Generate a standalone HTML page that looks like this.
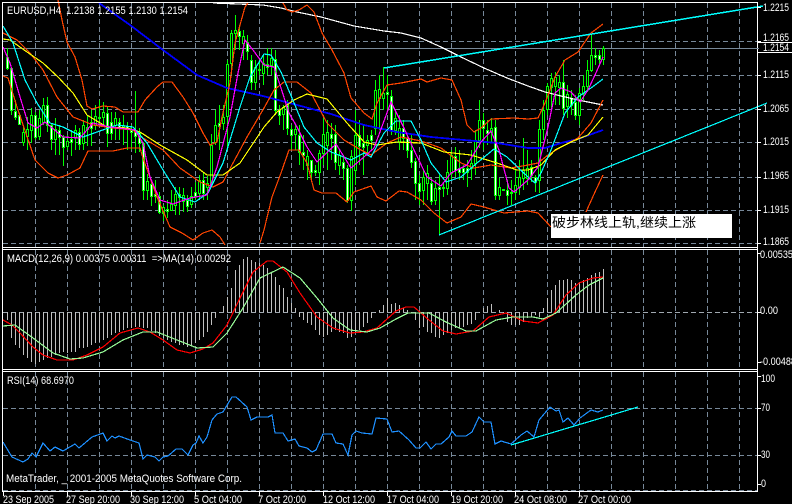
<!DOCTYPE html>
<html><head><meta charset="utf-8"><style>
html,body{margin:0;padding:0;background:#000;width:792px;height:504px;overflow:hidden}
svg{display:block}
text{font-family:"Liberation Sans","Noto Sans CJK SC",sans-serif;font-size:11px;fill:#fff}
polyline{fill:none;stroke-width:1.2}
</style></head><body>
<svg width="792" height="504" viewBox="0 0 792 504" xmlns="http://www.w3.org/2000/svg" shape-rendering="crispEdges">
<rect width="792" height="504" fill="#000"/>
<!-- grid -->
<path fill="none" stroke="#778899" stroke-dasharray="5 3" d="M3 41.5H757M3 75.5H757M3 109.5H757M3 142.5H757M3 177.5H757M3 210.5H757M3 243.5H757M3 408.5H757M3 455.5H757
M35.5 3V247M67.5 3V247M99.5 3V247M131.5 3V247M163.5 3V247M195.5 3V247M227.5 3V247M259.5 3V247M291.5 3V247M323.5 3V247M355.5 3V247M387.5 3V247M419.5 3V247M451.5 3V247M483.5 3V247M515.5 3V247M547.5 3V247M579.5 3V247M611.5 3V247M643.5 3V247M675.5 3V247M707.5 3V247M739.5 3V247
M35.5 250V369M67.5 250V369M99.5 250V369M131.5 250V369M163.5 250V369M195.5 250V369M227.5 250V369M259.5 250V369M291.5 250V369M323.5 250V369M355.5 250V369M387.5 250V369M419.5 250V369M451.5 250V369M483.5 250V369M515.5 250V369M547.5 250V369M579.5 250V369M611.5 250V369M643.5 250V369M675.5 250V369M707.5 250V369M739.5 250V369
M35.5 372V491M67.5 372V491M99.5 372V491M131.5 372V491M163.5 372V491M195.5 372V491M227.5 372V491M259.5 372V491M291.5 372V491M323.5 372V491M355.5 372V491M387.5 372V491M419.5 372V491M451.5 372V491M483.5 372V491M515.5 372V491M547.5 372V491M579.5 372V491M611.5 372V491M643.5 372V491M675.5 372V491M707.5 372V491M739.5 372V491"/>
<path stroke="#778899" d="M3 48.5H757"/>
<path fill="none" stroke="#a0a8b0" stroke-dasharray="5 3" d="M3 312.5H757"/>
<!-- wicks -->
<path fill="none" stroke="#00ff00" d="M7.5 48V70M11.5 68V115M15.5 100V120M19.5 113V124M23.5 125V146M27.5 117V150M31.5 108V143M35.5 112V140M39.5 110V140M43.5 98V125M47.5 97V132M51.5 123V150M55.5 118V155M59.5 125V155M63.5 135V166M67.5 135V150M71.5 130V156M75.5 125V150M79.5 128V150M83.5 120V150M87.5 115V146M91.5 110V146M95.5 105V130M99.5 100V125M103.5 102V125M107.5 106V147M111.5 112V140M115.5 112V140M119.5 118V140M123.5 115V145M127.5 122V150M131.5 125V150M135.5 91V153M139.5 128V152M143.5 142V200M147.5 174V200M151.5 180V206M155.5 180V203M159.5 192V214M163.5 205V221M167.5 200V218M171.5 190V211M175.5 187V215M179.5 187V215M183.5 188V212M187.5 195V212M191.5 187V208M195.5 182V200M199.5 175V200M203.5 172V200M207.5 176V200M211.5 134V187M215.5 110V145M219.5 105V150M223.5 105V130M227.5 60V150M231.5 30V75M235.5 15V50M239.5 25V50M243.5 30V60M247.5 35V60M251.5 55V90M255.5 60V90M259.5 58V75M263.5 55V85M267.5 48V75M271.5 48V75M275.5 50V115M279.5 105V125M283.5 105V130M287.5 100V135M291.5 125V150M295.5 125V150M299.5 125V165M303.5 135V170M307.5 150V180M311.5 160V182M315.5 165V176M319.5 150V185M323.5 118V165M327.5 120V170M331.5 123V160M335.5 125V170M339.5 150V175M343.5 155V180M347.5 165V203M351.5 150V211M355.5 110V185M359.5 120V165M363.5 125V175M367.5 135V155M371.5 130V150M375.5 80V135M379.5 75V130M383.5 67V110M387.5 75V110M391.5 90V135M395.5 112V135M399.5 115V150M403.5 120V150M407.5 135V158M411.5 135V168M415.5 158V200M419.5 175V205M423.5 170V205M427.5 165V200M431.5 178V205M435.5 180V205M439.5 173V235M443.5 183V197M447.5 160V195M451.5 150V180M455.5 147V177M459.5 150V180M463.5 165V180M467.5 160V187M471.5 150V180M475.5 130V175M479.5 100V148M483.5 113V150M487.5 120V145M491.5 118V143M495.5 120V200M499.5 178V200M503.5 189V191M507.5 180V205M511.5 180V205M515.5 170V200M519.5 160V195M523.5 138V190M527.5 150V185M531.5 160V182M535.5 175V192M539.5 120V193M543.5 100V140M547.5 83V115M551.5 73V110M555.5 72V105M559.5 75V105M563.5 60V115M567.5 85V118M571.5 90V115M575.5 95V120M579.5 88V125M583.5 75V100M587.5 60V92M591.5 35V72M595.5 48V65M599.5 50V65M603.5 46V65"/>
<!-- bear bodies -->
<path fill="#fff" stroke="#00ff00" d="M6.5 57.5h2v11h-2zM10.5 68.5h2v42h-2zM14.5 111.5h2v6h-2zM18.5 115.5h2v9h-2zM34.5 115.5h2v22h-2zM46.5 105.5h2v20h-2zM50.5 125.5h2v14h-2zM58.5 130.5h2v7h-2zM62.5 137.5h2v10h-2zM70.5 139.5h2v3h-2zM78.5 132.5h2v12h-2zM90.5 122.5h2v6h-2zM98.5 117.5h2v1h-2zM106.5 113.5h2v20h-2zM110.5 122.5h2v11h-2zM118.5 122.5h2v6h-2zM126.5 126.5h2v3h-2zM130.5 130.5h2v2h-2zM134.5 130.5h2v6h-2zM138.5 132.5h2v11h-2zM142.5 143.5h2v47h-2zM150.5 184.5h2v12h-2zM154.5 194.5h2v2h-2zM158.5 196.5h2v16h-2zM166.5 209.5h2v2h-2zM178.5 194.5h2v3h-2zM186.5 200.5h2v6h-2zM194.5 192.5h2v4h-2zM202.5 180.5h2v13h-2zM218.5 123.5h2v3h-2zM238.5 31.5h2v5h-2zM246.5 42.5h2v9h-2zM250.5 60.5h2v22h-2zM258.5 69.5h2v1h-2zM266.5 64.5h2v3h-2zM274.5 59.5h2v51h-2zM278.5 110.5h2v5h-2zM286.5 105.5h2v23h-2zM290.5 129.5h2v6h-2zM298.5 135.5h2v17h-2zM302.5 152.5h2v3h-2zM310.5 160.5h2v12h-2zM314.5 170.5h2v2h-2zM330.5 134.5h2v4h-2zM334.5 134.5h2v28h-2zM342.5 162.5h2v6h-2zM346.5 168.5h2v32h-2zM358.5 135.5h2v11h-2zM362.5 143.5h2v4h-2zM370.5 135.5h2v5h-2zM386.5 92.5h2v2h-2zM390.5 96.5h2v34h-2zM402.5 128.5h2v10h-2zM406.5 138.5h2v12h-2zM410.5 150.5h2v12h-2zM414.5 161.5h2v22h-2zM418.5 183.5h2v8h-2zM430.5 183.5h2v18h-2zM438.5 187.5h2v2h-2zM442.5 187.5h2v1h-2zM454.5 156.5h2v14h-2zM458.5 168.5h2v4h-2zM462.5 168.5h2v4h-2zM466.5 168.5h2v4h-2zM482.5 120.5h2v8h-2zM486.5 130.5h2v3h-2zM494.5 127.5h2v68h-2zM502.5 189.5h2v1h-2zM506.5 190.5h2v5h-2zM510.5 192.5h2v1h-2zM530.5 167.5h2v8h-2zM534.5 177.5h2v5h-2zM562.5 82.5h2v26h-2zM570.5 98.5h2v7h-2zM574.5 102.5h2v13h-2zM594.5 55.5h2v2h-2zM598.5 55.5h2v4h-2z"/>
<!-- bull bodies -->
<path fill="#000" stroke="#00ff00" d="M22.5 132.5h2v10h-2zM26.5 129.5h2v7h-2zM30.5 115.5h2v15h-2zM38.5 118.5h2v18h-2zM42.5 105.5h2v17h-2zM54.5 129.5h2v10h-2zM66.5 141.5h2v5h-2zM74.5 130.5h2v7h-2zM82.5 125.5h2v18h-2zM86.5 127.5h2v2h-2zM94.5 116.5h2v9h-2zM102.5 112.5h2v5h-2zM114.5 118.5h2v7h-2zM122.5 125.5h2v3h-2zM146.5 181.5h2v9h-2zM162.5 207.5h2v6h-2zM170.5 204.5h2v6h-2zM174.5 194.5h2v11h-2zM182.5 195.5h2v6h-2zM190.5 196.5h2v8h-2zM198.5 180.5h2v13h-2zM206.5 183.5h2v4h-2zM210.5 145.5h2v38h-2zM214.5 125.5h2v17h-2zM222.5 117.5h2v6h-2zM226.5 64.5h2v52h-2zM230.5 33.5h2v30h-2zM234.5 30.5h2v3h-2zM242.5 36.5h2v7h-2zM254.5 67.5h2v15h-2zM262.5 63.5h2v10h-2zM270.5 58.5h2v7h-2zM282.5 107.5h2v7h-2zM294.5 129.5h2v5h-2zM306.5 156.5h2v9h-2zM318.5 153.5h2v19h-2zM322.5 134.5h2v19h-2zM326.5 132.5h2v13h-2zM338.5 155.5h2v10h-2zM350.5 156.5h2v44h-2zM354.5 135.5h2v35h-2zM366.5 140.5h2v5h-2zM374.5 90.5h2v38h-2zM378.5 89.5h2v9h-2zM382.5 93.5h2v5h-2zM394.5 118.5h2v12h-2zM398.5 128.5h2v14h-2zM422.5 177.5h2v13h-2zM426.5 173.5h2v10h-2zM434.5 188.5h2v12h-2zM446.5 172.5h2v16h-2zM450.5 155.5h2v18h-2zM470.5 163.5h2v5h-2zM474.5 140.5h2v23h-2zM478.5 120.5h2v20h-2zM490.5 128.5h2v4h-2zM498.5 187.5h2v8h-2zM514.5 185.5h2v7h-2zM518.5 177.5h2v10h-2zM522.5 170.5h2v8h-2zM526.5 168.5h2v10h-2zM538.5 129.5h2v51h-2zM542.5 110.5h2v19h-2zM546.5 86.5h2v23h-2zM550.5 78.5h2v9h-2zM554.5 77.5h2v9h-2zM558.5 82.5h2v5h-2zM566.5 94.5h2v12h-2zM578.5 93.5h2v22h-2zM582.5 86.5h2v7h-2zM586.5 70.5h2v16h-2zM590.5 55.5h2v15h-2zM602.5 48.5h2v11h-2z"/>
<!-- price indicators -->
<polyline style="stroke-width:1.8" stroke="#0000ff" points="99,3 130,25 163,50 197,75 227,88 263,96 297,105 331,114 364,125 397,132 431,137 464,140 497,143 528,148 545,148 561,143 578,139 603,130"/>
<polyline stroke="#ffffff" points="213,3 263,5 281,8 297,12 321,17 354,26 384,31 401,33 421,38 441,47 461,57 484,68 507,78 528,86 545,92 561,96 578,100 603,105"/>
<polyline stroke="#ff4500" points="58,0 62,20 67,42 75,57 82,80 87,106 92,109 103,106 115,107 123,112 138,112 145,100 157,87 163,82 172,82 183,97 193,113 203,133 210,145 217,142 222,117 230,83 235,43 245,7 248,3"/>
<polyline stroke="#ff4500" points="283,3 287,10 292,12 299,10 307,5 314,12 322,33 332,50 344,73 351,98 364,113 372,119 377,103 387,85 401,83 421,79 427,82 441,78 452,80 461,100 467,125 474,132 481,128 491,119 514,118 528,119 538,118 545,103 555,77 565,60 578,52 591,33 603,24"/>
<polyline stroke="#ff4500" points="3,76 8,78 17,107 35,160 48,173 58,178 67,175 80,168 88,151 113,151 127,148 140,148 143,158 157,197 170,227 182,233 193,240 203,233 212,230 220,237 225,245"/>
<polyline stroke="#ff4500" points="260,243 264,230 272,197 281,173 289,150 299,150 307,163 314,190 322,193 336,193 347,202 354,192 371,186 377,197 386,201 399,191 407,192 421,200 434,213 447,223 461,217 471,204 484,207 504,213 528,211 538,213 551,227"/>
<polyline stroke="#ff4500" points="586,212 595,192 603,175"/>
<polyline stroke="#ff4500" points="3,33 17,40 30,53 43,70 57,97 73,117 93,125 113,128 133,130 143,138 163,150 180,168 200,182 213,187 223,182 233,163 247,137 264,108 274,90 284,82 297,82 311,93 327,123 344,140 361,150 371,155 387,143 401,137 421,141 441,148 461,163 474,168 491,165 511,168 528,165 538,163 548,155 561,147 578,138 591,123 603,100"/>
<polyline stroke="#ffff00" points="3,39 10,40 27,52 43,63 58,77 73,93 87,115 107,127 127,128 140,132 160,145 187,160 207,175 223,175 240,163 264,127 277,112 294,100 307,94 327,99 347,123 364,142 377,145 397,142 421,143 444,152 471,155 497,163 517,170 528,170 541,165 555,150 571,142 588,135 603,117"/>
<polyline stroke="#00ffff" points="3,26 13,43 25,80 37,103 50,123 63,127 83,137 97,132 117,125 133,127 147,143 163,170 180,197 195,202 208,193 223,163 240,107 250,77 264,54 271,55 281,72 292,98 304,127 317,143 331,152 351,160 364,153 371,157 384,133 396,121 411,121 421,140 431,163 446,182 461,177 477,163 494,149 507,157 528,177 535,183 541,173 551,150 565,113 578,97 591,88 603,79"/>
<polyline stroke="#ff00ff" points="3,47 10,63 20,97 28,123 37,128 45,122 63,137 80,138 93,123 110,127 135,130 143,143 150,177 160,200 173,204 190,198 207,195 217,167 230,117 238,73 245,40 253,50 264,65 274,67 281,88 289,113 297,127 307,147 317,162 336,144 351,168 364,157 374,148 391,102 404,128 414,150 427,177 441,186 451,173 467,165 481,142 491,131 499,150 509,188 514,192 528,180 538,167 548,127 555,93 561,88 571,92 580,102 588,90 595,75 603,57"/>
<!-- trendlines -->
<path fill="none" stroke="#00ffff" stroke-width="1.5" d="M384 68L763 6"/>
<path fill="none" stroke="#00ffff" stroke-width="1.2" d="M439 235L767 103M511 445L638 407"/>
<!-- MACD histogram -->
<path fill="none" stroke="#c0c0c0" d="M7.5 312V320M11.5 312V338M15.5 312V345M19.5 312V348M23.5 312V355M27.5 312V358M31.5 312V362M35.5 312V364M39.5 312V362M43.5 312V360M47.5 312V358M51.5 312V357M55.5 312V355M59.5 312V353M63.5 312V352M67.5 312V353M71.5 312V352M75.5 312V352M79.5 312V348M83.5 312V348M87.5 312V347M91.5 312V345M95.5 312V343M99.5 312V342M103.5 312V340M107.5 312V338M111.5 312V335M115.5 312V333M119.5 312V332M123.5 312V330M127.5 312V328M131.5 312V328M135.5 312V327M139.5 312V327M143.5 312V328M147.5 312V328M151.5 312V331M155.5 312V333M159.5 312V336M163.5 312V338M167.5 312V340M171.5 312V342M175.5 312V343M179.5 312V345M183.5 312V345M187.5 312V347M191.5 312V345M195.5 312V343M199.5 312V340M203.5 312V337M207.5 312V332M211.5 312V325M215.5 312V318M223.5 312V306M227.5 312V297M231.5 312V288M235.5 312V270M239.5 312V265M243.5 312V259M247.5 312V257M251.5 312V260M255.5 312V262M259.5 312V263M263.5 312V265M267.5 312V268M271.5 312V273M275.5 312V277M279.5 312V285M283.5 312V288M287.5 312V297M291.5 312V303M295.5 312V308M299.5 312V317M303.5 312V320M307.5 312V323M311.5 312V325M315.5 312V330M319.5 312V335M323.5 312V337M327.5 312V335M331.5 312V332M335.5 312V330M339.5 312V332M343.5 312V333M347.5 312V338M351.5 312V337M355.5 312V333M359.5 312V330M363.5 312V327M367.5 312V323M371.5 312V318M375.5 312V313M379.5 312V310M383.5 312V305M387.5 312V298M391.5 312V304M395.5 312V303M399.5 312V305M403.5 312V308M407.5 312V310M411.5 312V313M415.5 312V320M419.5 312V328M423.5 312V327M427.5 312V332M431.5 312V333M435.5 312V337M439.5 312V338M443.5 312V335M447.5 312V333M451.5 312V330M455.5 312V328M459.5 312V328M463.5 312V327M467.5 312V325M471.5 312V324M475.5 312V320M479.5 312V313M483.5 312V308M487.5 312V306M491.5 312V304M499.5 312V310M503.5 312V313M507.5 312V322M511.5 312V325M515.5 312V325M519.5 312V325M523.5 312V322M527.5 312V318M531.5 312V317M535.5 312V315M539.5 312V317M543.5 312V308M547.5 312V298M551.5 312V290M555.5 312V285M559.5 312V280M563.5 312V280M567.5 312V279M571.5 312V280M575.5 312V283M579.5 312V282M583.5 312V280M587.5 312V278M591.5 312V275M595.5 312V273M599.5 312V272M603.5 312V269"/>
<polyline stroke="#ff0000" points="3,320 12,325 20,333 33,347 43,355 57,360 73,360 87,355 103,347 120,333 138,328 150,332 163,340 177,350 190,353 203,349 213,343 227,325 240,298 253,272 267,261 273,261 287,272 300,293 317,317 333,328 350,333 363,332 377,328 396,311 406,307 414,307 429,320 443,331 456,334 473,331 489,317 506,313 523,321 538,323 553,315 566,295 579,283 593,278 603,277"/>
<polyline stroke="#98fb98" points="3,326 15,325 33,338 53,353 70,359 83,358 103,352 123,340 143,332 157,332 177,340 197,348 213,347 227,333 243,308 260,278 283,267 300,278 317,298 333,318 350,330 367,332 380,328 396,319 408,313 429,313 446,322 466,331 476,331 496,320 513,317 533,317 543,319 556,313 576,295 589,285 603,278"/>
<!-- RSI -->
<polyline stroke="#1e90ff" points="3,442 12,457 23,462 28,459 32,453 36,457 43,443 50,451 55,447 63,451 75,444 79,448 92,437 103,433 107,441 112,436 115,438 119,436 130,440 139,443 143,459 147,455 155,457 159,461 163,457 168,456 176,449 182,449 188,455 193,445 196,443 199,436 203,443 207,437 212,420 217,414 223,412 232,397 236,397 247,407 251,420 257,417 268,417 272,415 275,433 283,433 288,441 295,439 299,446 307,448 312,452 316,450 323,434 332,434 336,443 343,444 348,455 352,435 356,431 362,433 372,434 376,418 387,419 392,432 399,431 409,440 416,448 420,448 426,442 431,449 436,444 441,444 449,437 452,431 456,436 466,436 472,432 479,417 484,422 491,422 495,444 501,441 511,444 521,435 527,431 534,437 539,420 550,407 556,411 559,410 563,422 568,418 574,425 580,418 591,410 598,412 603,410"/>
<!-- frames -->
<path fill="none" stroke="#fff" d="M2.5 2.5H757.5V491.5H2.5ZM2 247.5H758M2 249.5H758M2 369.5H758M2 371.5H758"/>
<path fill="none" stroke="#778899" stroke-dasharray="5 3" d="M3 490.5H757"/>
<!-- ticks -->
<path fill="none" stroke="#fff" d="M758 7.5h3M758 41.5h3M758 75.5h3M758 109.5h3M758 142.5h3M758 177.5h3M758 210.5h3M758 243.5h3M758 253.5h3M758 312.5h3M758 362.5h3M758 376.5h3M758 408.5h3M758 455.5h3M758 484.5h3M3.5 492v4M67.5 492v4M131.5 492v4M195.5 492v4M259.5 492v4M323.5 492v4M387.5 492v4M451.5 492v4M515.5 492v4M579.5 492v4"/>
<!-- pane text -->
<text x="7" y="14" textLength="181" lengthAdjust="spacingAndGlyphs" xml:space="preserve">EURUSD,H4  1.2138 1.2155 1.2130 1.2154</text>
<text x="7" y="262" textLength="224" lengthAdjust="spacingAndGlyphs" xml:space="preserve">MACD(12,26,9) 0.00375 0.00311  =&gt;MA(14) 0.00292</text>
<text x="7" y="384" textLength="67" lengthAdjust="spacingAndGlyphs">RSI(14) 68.6970</text>
<text x="6" y="482" textLength="236" lengthAdjust="spacingAndGlyphs">MetaTrader, _ 2001-2005 MetaQuotes Software Corp.</text>
<!-- price scale -->
<text x="763" y="11" textLength="26" lengthAdjust="spacingAndGlyphs">1.2215</text>
<text x="763" y="41" textLength="26" lengthAdjust="spacingAndGlyphs">1.2165</text>
<rect x="758" y="42" width="34" height="11" fill="#000"/>
<path stroke="#fff" d="M758 42.5H792M758 52.5H792"/>
<path stroke="#778899" d="M757 48.5H759"/>
<text x="763" y="51" textLength="26" lengthAdjust="spacingAndGlyphs">1.2154</text>
<text x="763" y="78" textLength="26" lengthAdjust="spacingAndGlyphs">1.2115</text>
<text x="763" y="112" textLength="26" lengthAdjust="spacingAndGlyphs">1.2065</text>
<text x="763" y="145" textLength="26" lengthAdjust="spacingAndGlyphs">1.2015</text>
<text x="763" y="179" textLength="26" lengthAdjust="spacingAndGlyphs">1.1965</text>
<text x="763" y="213" textLength="26" lengthAdjust="spacingAndGlyphs">1.1915</text>
<text x="763" y="245" textLength="26" lengthAdjust="spacingAndGlyphs">1.1865</text>
<text x="760" y="258" textLength="33" lengthAdjust="spacingAndGlyphs">0.00535</text>
<text x="760" y="314" textLength="18" lengthAdjust="spacingAndGlyphs">0.00</text>
<text x="760" y="365" textLength="36" lengthAdjust="spacingAndGlyphs">-0.00488</text>
<text x="761" y="382" textLength="14" lengthAdjust="spacingAndGlyphs">100</text>
<text x="761" y="411" textLength="9" lengthAdjust="spacingAndGlyphs">70</text>
<text x="761" y="458" textLength="9" lengthAdjust="spacingAndGlyphs">30</text>
<text x="761" y="487" textLength="5" lengthAdjust="spacingAndGlyphs">0</text>
<!-- time axis -->
<text x="3" y="503" textLength="51" lengthAdjust="spacingAndGlyphs">23 Sep 2005</text>
<text x="66" y="503" textLength="54" lengthAdjust="spacingAndGlyphs">27 Sep 20:00</text>
<text x="130" y="503" textLength="54" lengthAdjust="spacingAndGlyphs">30 Sep 12:00</text>
<text x="194" y="503" textLength="48" lengthAdjust="spacingAndGlyphs">5 Oct 04:00</text>
<text x="258" y="503" textLength="48" lengthAdjust="spacingAndGlyphs">7 Oct 20:00</text>
<text x="323" y="503" textLength="52" lengthAdjust="spacingAndGlyphs">12 Oct 12:00</text>
<text x="387" y="503" textLength="52" lengthAdjust="spacingAndGlyphs">17 Oct 04:00</text>
<text x="451" y="503" textLength="52" lengthAdjust="spacingAndGlyphs">19 Oct 20:00</text>
<text x="514" y="503" textLength="53" lengthAdjust="spacingAndGlyphs">24 Oct 08:00</text>
<text x="578" y="503" textLength="53" lengthAdjust="spacingAndGlyphs">27 Oct 00:00</text>
<!-- annotation -->
<rect x="551" y="214" width="181" height="24" fill="#fff"/>
<text x="552" y="227" textLength="144" lengthAdjust="spacingAndGlyphs" style="fill:#000;font-size:13px;font-family:'Liberation Sans','WenQuanYi Zen Hei','Noto Sans CJK SC',sans-serif" shape-rendering="auto">破步林线上轨,继续上涨</text>
</svg>
</body></html>
